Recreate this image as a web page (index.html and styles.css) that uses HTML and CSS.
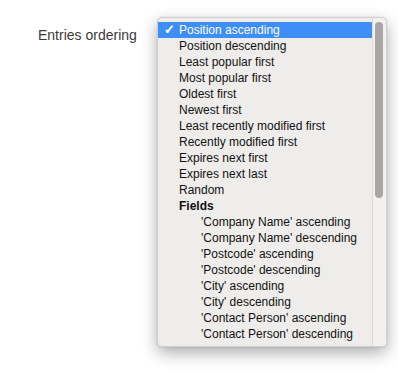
FILE: index.html
```html
<!DOCTYPE html>
<html>
	<head>
		<meta charset="utf-8">
		<title>Entries ordering</title>
		<link rel="stylesheet" href="styles.css">
	</head>
	<body>
		<div class="field">
			<label class="field-label">Entries ordering</label>
			<div class="menu">
				<ul class="menu-list">
					<li class="menu-item active"><span class="check">✓</span>Position ascending</li>
					<li class="menu-item">Position descending</li>
					<li class="menu-item">Least popular first</li>
					<li class="menu-item">Most popular first</li>
					<li class="menu-item">Oldest first</li>
					<li class="menu-item">Newest first</li>
					<li class="menu-item">Least recently modified first</li>
					<li class="menu-item">Recently modified first</li>
					<li class="menu-item">Expires next first</li>
					<li class="menu-item">Expires next last</li>
					<li class="menu-item">Random</li>
					<li class="menu-group">Fields</li>
					<li class="menu-item sub">'Company Name' ascending</li>
					<li class="menu-item sub">'Company Name' descending</li>
					<li class="menu-item sub">'Postcode' ascending</li>
					<li class="menu-item sub">'Postcode' descending</li>
					<li class="menu-item sub">'City' ascending</li>
					<li class="menu-item sub">'City' descending</li>
					<li class="menu-item sub">'Contact Person' ascending</li>
					<li class="menu-item sub">'Contact Person' descending</li>
				</ul>
				<div class="menu-scroll"><div class="menu-thumb"></div></div>
			</div>
		</div>
	</body>
</html>
```

FILE: styles.css
```css
*{margin:0;padding:0;box-sizing:border-box;}
ul{list-style:none;}
body{background:#fff;font-family:"Liberation Sans",Arial,sans-serif;min-height:373px;}

.field{display:flex;align-items:flex-start;gap:20px;padding:17px 0 0 38px;}
.field-label{font-size:14px;color:#3a3a3a;line-height:16px;padding-top:10px;width:99px;white-space:nowrap;}

.menu{display:flex;width:230px;height:330px;background:#eeedeb;border:1px solid rgba(0,0,0,.12);border-radius:5px;
box-shadow:0 6px 16px rgba(0,0,0,.32),0 0 2px rgba(0,0,0,.12);overflow:hidden;}
.menu-list{flex:1;padding-top:4px;font-size:12px;color:#111;}
.menu-item,.menu-group{height:16px;line-height:16px;padding-left:21px;white-space:nowrap;}
.menu-item.sub{padding-left:43px;}
.menu-group{font-weight:bold;}
.menu-item.active{background:#3d8ef7;color:#fff;position:relative;}
.menu-item.active .check{position:absolute;left:6px;top:0;font-size:13px;font-weight:bold;}

.menu-scroll{width:14px;border-left:1px solid #dcdbd9;background:#f2f1f0;padding:4px 0 0 2px;}
.menu-thumb{width:8px;height:176px;background:#a8a7a6;border-radius:4px;}
```
